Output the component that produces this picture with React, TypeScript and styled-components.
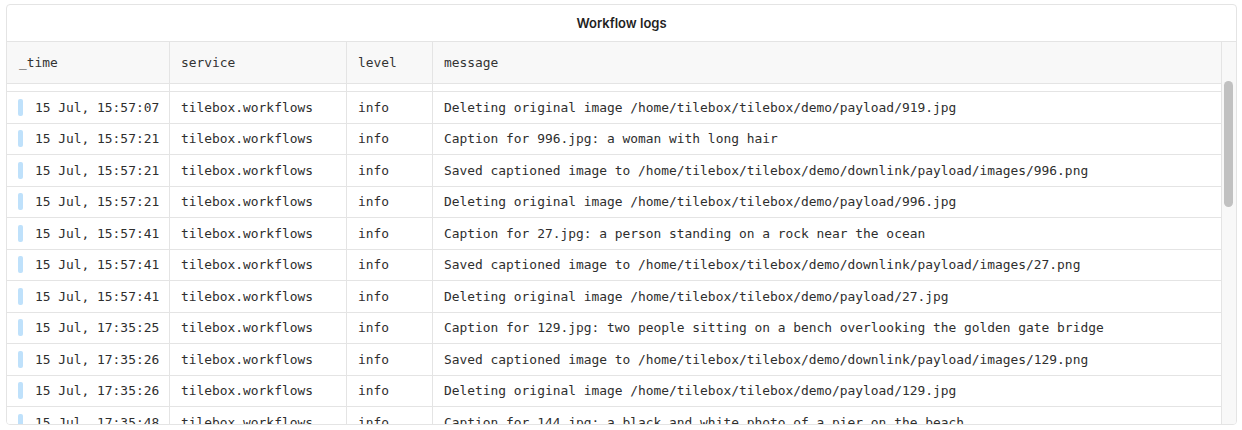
import React from "react";
import styled, { createGlobalStyle } from "styled-components";

const GlobalStyle = createGlobalStyle`
  html, body {
    margin: 0;
    padding: 0;
    background: #ffffff;
  }
  * { box-sizing: border-box; }
`;

const Page = styled.div`
  padding: 4px 0 0 6px;
  width: 1242px;
`;

const Card = styled.section`
  width: 1231px;
  height: 421px;
  border: 1px solid #e4e4e4;
  border-radius: 4px;
  background: #ffffff;
  display: flex;
  flex-direction: column;
  overflow: hidden;
`;

const Title = styled.h2`
  margin: 0;
  height: 37px;
  flex: none;
  display: flex;
  align-items: center;
  justify-content: center;
  border-bottom: 1px solid #e4e4e4;
  font-family: Inter, "Noto Sans", sans-serif;
  font-size: 13px;
  font-weight: 600;
  color: #1f1f1f;
`;

const Body = styled.div`
  flex: 1;
  min-height: 0;
  display: flex;
`;

const Viewport = styled.div`
  flex: 1;
  min-width: 0;
  overflow: hidden;
`;

const Grid = styled.div`
  display: grid;
  grid-template-columns: 163px 177px 86px 1fr;
  font-family: "DejaVu Sans Mono", "Liberation Mono", monospace;
  font-size: 12.9px;
  color: #2e2e2e;
`;

const Cell = styled.div<{ $h: number; $head?: boolean; $last?: boolean }>`
  height: ${(p) => p.$h}px;
  display: flex;
  align-items: center;
  padding: 0 11px;
  white-space: nowrap;
  overflow: hidden;
  background: ${(p) => (p.$head ? "#f8f8f8" : "#ffffff")};
  border-bottom: 1px solid #e4e4e4;
  border-right: ${(p) => (p.$last ? "none" : "1px solid #e4e4e4")};
  color: ${(p) => (p.$head ? "#333333" : "#2e2e2e")};
`;

const HeadFirst = styled(Cell)`
  padding-left: 12px;
`;

const TimeCell = styled(Cell)`
  padding-left: 11px;
  gap: 12px;
`;

const Marker = styled.span`
  width: 5px;
  height: 17px;
  border-radius: 2px;
  background: #bfe1fb;
  flex: none;
`;

const Track = styled.div`
  width: 15px;
  flex: none;
  background: #f8f8f8;
  border-left: 1px solid #e4e4e4;
  padding: 39px 0 0 2px;
`;

const Thumb = styled.div`
  width: 9px;
  height: 126px;
  border-radius: 5px;
  background: #c1c1c1;
`;

const ROW_H = 31.5;

const logs: [string, string][] = [
  ["15 Jul, 15:57:07", "Deleting original image /home/tilebox/tilebox/demo/payload/919.jpg"],
  ["15 Jul, 15:57:21", "Caption for 996.jpg: a woman with long hair"],
  ["15 Jul, 15:57:21", "Saved captioned image to /home/tilebox/tilebox/demo/downlink/payload/images/996.png"],
  ["15 Jul, 15:57:21", "Deleting original image /home/tilebox/tilebox/demo/payload/996.jpg"],
  ["15 Jul, 15:57:41", "Caption for 27.jpg: a person standing on a rock near the ocean"],
  ["15 Jul, 15:57:41", "Saved captioned image to /home/tilebox/tilebox/demo/downlink/payload/images/27.png"],
  ["15 Jul, 15:57:41", "Deleting original image /home/tilebox/tilebox/demo/payload/27.jpg"],
  ["15 Jul, 17:35:25", "Caption for 129.jpg: two people sitting on a bench overlooking the golden gate bridge"],
  ["15 Jul, 17:35:26", "Saved captioned image to /home/tilebox/tilebox/demo/downlink/payload/images/129.png"],
  ["15 Jul, 17:35:26", "Deleting original image /home/tilebox/tilebox/demo/payload/129.jpg"],
  ["15 Jul, 17:35:48", "Caption for 144.jpg: a black and white photo of a pier on the beach"],
  ["15 Jul, 17:35:48", "Saved captioned image to /home/tilebox/tilebox/demo/downlink/payload/images/144.png"],
];

const headers = ["_time", "service", "level", "message"];

export default function App() {
  return (
    <>
      <GlobalStyle />
      <Page>
        <Card>
          <Title>Workflow logs</Title>
          <Body>
            <Viewport>
              <Grid>
                <HeadFirst $h={42} $head>
                  {headers[0]}
                </HeadFirst>
                {headers.slice(1).map((h, i) => (
                  <Cell key={h} $h={42} $head $last={i === 2}>
                    {h}
                  </Cell>
                ))}
                {headers.map((h, i) => (
                  <Cell key={"sp" + h} $h={8} $last={i === 3} />
                ))}
                {logs.map(([t, m], idx) => (
                  <React.Fragment key={idx}>
                    <TimeCell $h={ROW_H}>
                      <Marker />
                      {t}
                    </TimeCell>
                    <Cell $h={ROW_H}>tilebox.workflows</Cell>
                    <Cell $h={ROW_H}>info</Cell>
                    <Cell $h={ROW_H} $last>
                      {m}
                    </Cell>
                  </React.Fragment>
                ))}
              </Grid>
            </Viewport>
            <Track>
              <Thumb />
            </Track>
          </Body>
        </Card>
      </Page>
    </>
  );
}
